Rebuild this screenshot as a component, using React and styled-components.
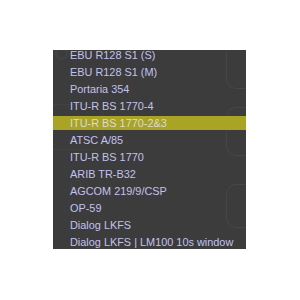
import styled, { createGlobalStyle } from 'styled-components'

const GlobalStyle = createGlobalStyle`
    html, body {
        margin: 0;
        padding: 0;
        background: #ffffff;
    }
`;

const Panel = styled.div`
    display: grid;
    width: 193px;
    height: 199px;
    margin: 50px 0 0 53px;
    background-color: #3c3c3c;
    overflow: hidden;
    font-family: "Liberation Sans", Arial, sans-serif;
`;

const Ghost = styled.div`
    grid-area: 1 / 1;
    display: flex;
    justify-content: space-between;
    pointer-events: none;
`;

const GhostLeft = styled.div`
    display: flex;
    flex-direction: column;
    width: 50px;
    .ring {
        width: 9px;
        height: 9px;
        margin: -3px 0 0 2px;
        border: 2px solid #424242;
        border-radius: 50%;
    }
    .box {
        height: 44px;
        margin-top: 44px;
        border: 1px solid #424242;
        border-left: none;
        border-radius: 0 8px 8px 0;
    }
    .tick {
        width: 8px;
        height: 12px;
        margin: 30px 0 0 18px;
        border: 1px solid #424242;
        border-radius: 3px;
    }
`;

const GhostRight = styled.div`
    display: flex;
    flex-direction: column;
    width: 20px;
`;

const GhostBox = styled.div`
    width: 30px;
    height: ${props => props.h}px;
    margin-top: ${props => props.top}px;
    border: 1px solid #464646;
    border-right: none;
    border-radius: 10px 0 0 10px;
`;

const List = styled.ul`
    grid-area: 1 / 1;
    list-style: none;
    margin: -2px 0 0 0;
    padding: 0;
`;

const Item = styled.li`
    height: 14px;
    line-height: 14px;
    margin-bottom: 3px;
    padding-left: 17px;
    font-size: 10.9px;
    white-space: nowrap;
    color: ${props => props.active ? '#dcdcd0' : '#c2c2ee'};
    background-color: ${props => props.active ? '#a9a326' : 'transparent'};
`;

const presets = [
    'EBU R128 S1 (S)',
    'EBU R128 S1 (M)',
    'Portaria 354',
    'ITU-R BS 1770-4',
    'ITU-R BS 1770-2&3',
    'ATSC A/85',
    'ITU-R BS 1770',
    'ARIB TR-B32',
    'AGCOM 219/9/CSP',
    'OP-59',
    'Dialog LKFS',
    'Dialog LKFS | LM100 10s window'
];

const App = () => {
    const selected = 'ITU-R BS 1770-2&3';

    return (
        <>
            <GlobalStyle />
            <Panel>
                <Ghost>
                    <GhostLeft>
                        <div className='ring' />
                        <div className='box' />
                        <div className='tick' />
                    </GhostLeft>
                    <GhostRight>
                        <GhostBox top={-12} h={49} />
                        <GhostBox top={18} h={47} />
                        <GhostBox top={28} h={42} />
                    </GhostRight>
                </Ghost>
                <List>
                    {presets.map(name => (
                        <Item key={name} active={name === selected}>{name}</Item>
                    ))}
                </List>
            </Panel>
        </>
    )
}

export default App;
